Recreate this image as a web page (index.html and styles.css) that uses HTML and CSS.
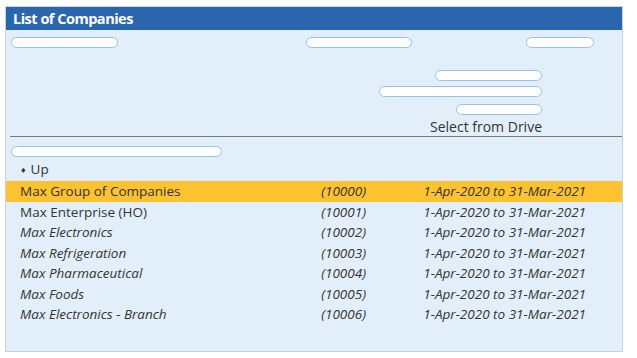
FILE: index.html
```html
<!DOCTYPE html>
<html>
<head>
<meta charset="utf-8">
<link rel="stylesheet" href="styles.css">
</head>
<body>
<div class="panel">
  <div class="header">List of Companies</div>
  <div class="content">
    <div class="toolbar">
      <span class="pill p1"></span>
      <span class="pill p2"></span>
      <span class="pill p3"></span>
    </div>
    <div class="drive">
      <span class="pill d1"></span>
      <span class="pill d2"></span>
      <span class="pill d3"></span>
      <span class="drive-label">Select from Drive</span>
    </div>
    <div class="sep"></div>
    <span class="pill search"></span>
    <div class="up"><span class="diamond">♦</span><span>Up</span></div>
    <div class="list">
      <div class="row sel"><span class="name">Max Group of Companies</span><span class="code">(10000)</span><span class="period">1-Apr-2020 to 31-Mar-2021</span></div>
      <div class="row"><span class="name">Max Enterprise (HO)</span><span class="code">(10001)</span><span class="period">1-Apr-2020 to 31-Mar-2021</span></div>
      <div class="row it"><span class="name">Max Electronics</span><span class="code">(10002)</span><span class="period">1-Apr-2020 to 31-Mar-2021</span></div>
      <div class="row it"><span class="name">Max Refrigeration</span><span class="code">(10003)</span><span class="period">1-Apr-2020 to 31-Mar-2021</span></div>
      <div class="row it"><span class="name">Max Pharmaceutical</span><span class="code">(10004)</span><span class="period">1-Apr-2020 to 31-Mar-2021</span></div>
      <div class="row it"><span class="name">Max Foods</span><span class="code">(10005)</span><span class="period">1-Apr-2020 to 31-Mar-2021</span></div>
      <div class="row it"><span class="name">Max Electronics - Branch</span><span class="code">(10006)</span><span class="period">1-Apr-2020 to 31-Mar-2021</span></div>
    </div>
  </div>
</div>
</body>
</html>
```
FILE: styles.css
```css
* { box-sizing: border-box; }
html, body { margin: 0; padding: 0; background: #ffffff; }
body {
  font-family: "Open Sans", "Noto Sans", sans-serif;
  color: #333333;
}
.panel {
  margin: 6px 0 0 5px;
  width: 618px;
  height: 346px;
  border: 1px solid #c9d3dd;
  background: #e2effa;
  display: flex;
  flex-direction: column;
}
.header {
  height: 23px;
  background: #2a66ae;
  color: #ffffff;
  font-weight: 700;
  font-size: 14.5px;
  line-height: 23px;
  padding-left: 7px;
  letter-spacing: -0.5px;
}
.content {
  flex: 1;
  display: flex;
  flex-direction: column;
}
.pill {
  display: block;
  height: 11px;
  background: #ffffff;
  border: 1.5px solid #94c4ec;
  border-radius: 6px;
}
.toolbar {
  display: flex;
  padding: 7px 0 0 5px;
}
.p1 { width: 107px; }
.p2 { width: 106px; margin-left: 188px; }
.p3 { width: 68px; margin-left: 114px; }
.drive {
  display: flex;
  flex-direction: column;
  align-items: flex-end;
  padding-right: 80px;
  margin-top: 22px;
}
.d1 { width: 107px; }
.d2 { width: 163px; margin-top: 5px; }
.d3 { width: 86px; margin-top: 7px; }
.drive-label {
  font-size: 14px;
  line-height: 16px;
  margin-top: 4px;
  color: #333;
}
.sep {
  height: 1px;
  background: #7a7a7a;
  margin: 1px 0 0 4px;
}
.search {
  width: 211px;
  margin: 9px 0 0 5px;
}
.up {
  display: flex;
  align-items: center;
  height: 20px;
  font-size: 13.5px;
  padding-left: 15px;
  margin-top: 2px;
}
.diamond { font-size: 9px; line-height: 1; margin-right: 5px; }
.list { margin-top: 2px; }
.row {
  display: flex;
  height: 20.5px;
  line-height: 20.5px;
  font-size: 13.5px;
  padding-left: 14px;
}
.row.sel { background: #fdc230; }
.row .period, .row .code { font-style: italic; }
.row.it .name { font-style: italic; }
.name { width: 260px; }
.code { width: 86px; text-align: right; }
.period { width: 220px; text-align: right; }
```
